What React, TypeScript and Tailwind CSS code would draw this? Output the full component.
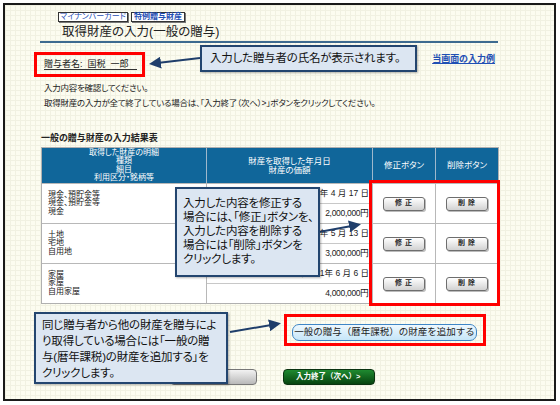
import React from "react";

const rows = [
  { lines: ["現金、預貯金等", "現金、預貯金等", "現金"], date: "平成30年 4 月 17 日", amount: "2,000,000円" },
  { lines: ["土地", "宅地", "自用地"], date: "平成30年 5 月 13 日", amount: "3,000,000円" },
  { lines: ["家屋", "家屋", "自用家屋"], date: "平成31年 6 月 6 日", amount: "4,000,000円" },
];

function SmallButton({ label }: { label: string }) {
  return (
    <span className="flex h-[14px] w-[42px] items-center justify-center rounded-[3px] border border-[#6e6e6e] bg-[linear-gradient(#ffffff,#d2d2d2)] pl-[2px] text-[7px] font-bold tracking-[3px] text-[#222] shadow-[1px_1px_0_#bbb]">
      {label}
    </span>
  );
}

function Callout({ className, children }: { className: string; children: React.ReactNode }) {
  return (
    <div
      className={`absolute border-2 border-[#23456f] bg-[#dce6f2] text-[11.5px] tracking-[-0.2px] text-[#111] whitespace-nowrap [font-feature-settings:'palt'] shadow-[1px_1px_2px_rgba(0,0,0,0.3)] ${className}`}
    >
      {children}
    </div>
  );
}

export default function App() {
  return (
    <div className="h-[405px] w-[560px] bg-white pl-[3px] pt-[3px] font-['Liberation_Sans','Noto_Sans_CJK_JP',sans-serif] text-[#222]">
      <div className="relative h-[398px] w-[553px] border-2 border-[#1a1a1a] bg-[#fcfcf0] bg-[linear-gradient(to_right,#f1f1e2_1px,transparent_1px),linear-gradient(to_bottom,#f1f1e2_1px,transparent_1px)] bg-size-[5px_5px]">
        {/* tabs */}
        <div className="ml-[53px] mt-[7px] flex h-[10px] gap-[3px] [font-feature-settings:'palt']">
          <span className="flex w-[70px] items-center justify-center border border-[#333] bg-white text-[8px] leading-none text-[#1f4fb4] shadow-[1px_1px_0_#777]">
            マイナンバーカード
          </span>
          <span className="flex w-[54px] items-center justify-center border border-[#333] bg-white text-[8px] font-bold leading-none text-[#1f4fb4] shadow-[1px_1px_0_#777]">
            特例贈与財産
          </span>
        </div>

        {/* title */}
        <div className="ml-[57px] mt-[2px] h-[16px] text-[12.5px] leading-[16px] [font-feature-settings:'palt']">
          取得財産の入力(一般の贈与)
        </div>
        <div className="ml-[35px] mt-[1px] h-[2px] w-[458px] bg-[#3d6a8f]" />

        <div className="ml-[39px] flex h-[28px] w-[451px] justify-between [font-feature-settings:'palt']">
          <div className="pt-[16px]">
            <div className="w-[93px] border-b border-[#333] text-[9px] leading-[10px]">贈与者名:&nbsp;&nbsp;国税&nbsp;&nbsp;一郎</div>
          </div>
          <div className="pt-[2px]">
            <span className="text-[9px] font-bold leading-[10px] text-[#1f4fb4] underline">当画面の入力例</span>
          </div>
        </div>

        <div className="ml-[39px] mt-[9.5px] text-[8.5px] leading-[15px] tracking-[-0.25px] [font-feature-settings:'palt']">
          <div>入力内容を確認してください。</div>
          <div>取得財産の入力が全て終了している場合は、「入力終了（次へ）&gt;」ボタンをクリックしてください。</div>
        </div>

        <div className="ml-[36px] mt-[21.5px] text-[9px] font-bold leading-[12px] [font-feature-settings:'palt']">
          一般の贈与財産の入力結果表
        </div>

        {/* table */}
        <div className="ml-[36px] mt-[3px] w-[458px] border border-[#b0b0b0] bg-white text-[8.5px] [font-feature-settings:'palt']">
          <div className="grid h-[35px] grid-cols-[164px_166px_63px_1fr] bg-[#10669a] text-center text-white">
            <div className="flex flex-col justify-center text-[8px] leading-[8.5px]">
              <span>取得した財産の明細</span>
              <span>種類</span>
              <span>細目</span>
              <span>利用区分・銘柄等</span>
            </div>
            <div className="flex flex-col justify-center border-l border-[#9fb8cc] leading-[9px]">
              <span>財産を取得した年月日</span>
              <span>財産の価額</span>
            </div>
            <div className="flex items-center justify-center border-l border-[#9fb8cc]">修正ボタン</div>
            <div className="flex items-center justify-center border-l border-[#9fb8cc]">削除ボタン</div>
          </div>
          {rows.map((r) => (
            <div key={r.date} className="grid h-[40px] grid-cols-[164px_166px_63px_1fr] border-t border-[#b8b8b8]">
              <div className="flex flex-col justify-center pl-[6px] text-[8px] leading-[8.5px]">
                {r.lines.map((l, i) => (
                  <span key={i}>{l}</span>
                ))}
              </div>
              <div className="flex flex-col border-l border-[#b8b8b8]">
                <div className="flex flex-1 items-center justify-end border-b border-[#c8c8c8] pr-[3px]">{r.date}</div>
                <div className="flex flex-1 items-center justify-end pr-[3px] font-['Liberation_Sans',sans-serif] tracking-[-0.3px]">
                  {r.amount}
                </div>
              </div>
              <div className="flex items-center justify-center border-l border-[#b8b8b8]">
                <SmallButton label="修正" />
              </div>
              <div className="flex items-center justify-center border-l border-[#b8b8b8]">
                <SmallButton label="削除" />
              </div>
            </div>
          ))}
        </div>

        {/* add button */}
        <div className="ml-[287px] mt-[20px] flex h-[17px] w-[185px] items-center justify-center rounded-[7px] border-[1.5px] border-[#3f86c6] bg-[linear-gradient(#eef8fe,#c6e6f8)] text-[9.5px] text-[#222]">
          一般の贈与（暦年課税）の財産を追加する
        </div>

        {/* bottom buttons */}
        <div className="ml-[165px] mt-[28px] flex gap-[26px]">
          <div className="flex h-[16px] w-[87px] items-center justify-center rounded-[4px] border border-[#777] bg-[linear-gradient(#f2f2f2,#b9b9b9)] text-[8px] font-bold">
            &lt; 戻る
          </div>
          <div className="flex h-[16px] w-[92px] items-center rounded-[4px] border border-[#0a3310] bg-[linear-gradient(#1f8a30,#07440f)] pl-[12px] text-[7.5px] font-bold text-white">
            入力終了（次へ）&gt;
          </div>
        </div>

        {/* red highlight boxes */}
        <div className="absolute left-[29px] top-[47px] h-[25px] w-[111px] border-[3px] border-[#ff0000]" />
        <div className="absolute left-[364px] top-[175px] h-[126px] w-[131px] border-[3px] border-[#ff0000]" />
        <div className="absolute left-[279px] top-[309px] h-[32px] w-[202px] border-[3px] border-[#ff0000]" />

        {/* arrows */}
        <svg className="pointer-events-none absolute left-0 top-0" width="549" height="394" viewBox="0 0 549 394">
          <defs>
            <marker id="ah" markerWidth="6" markerHeight="6" refX="4" refY="3" orient="auto" markerUnits="strokeWidth">
              <path d="M0,0 L6,3 L0,6 z" fill="#1f3e6b" />
            </marker>
          </defs>
          <line x1="195" y1="53" x2="148" y2="58.5" stroke="#1f3e6b" strokeWidth="2" markerEnd="url(#ah)" />
          <line x1="314" y1="227" x2="352" y2="220" stroke="#1f3e6b" strokeWidth="2" markerEnd="url(#ah)" />
          <line x1="225" y1="327" x2="272" y2="319" stroke="#1f3e6b" strokeWidth="2" markerEnd="url(#ah)" />
        </svg>

        {/* callouts */}
        <Callout className="left-[195px] top-[40px] flex h-[27px] w-[217px] items-center pl-[8px]">
          入力した贈与者の氏名が表示されます。
        </Callout>
        <Callout className="left-[170px] top-[182px] h-[90px] w-[145px] pl-[6px] pt-[7px] leading-[14px]">
          <div>入力した内容を修正する</div>
          <div>場合には、「修正」ボタンを、</div>
          <div>入力した内容を削除する</div>
          <div>場合には「削除」ボタンを</div>
          <div>クリックします。</div>
        </Callout>
        <Callout className="left-[29px] top-[307px] h-[72px] w-[194px] pl-[6px] pt-[3px] leading-[16px]">
          <div>同じ贈与者から他の財産を贈与によ</div>
          <div>り取得している場合には「一般の贈</div>
          <div>与(暦年課税)の財産を追加する」を</div>
          <div>クリックします。</div>
        </Callout>
      </div>
    </div>
  );
}
